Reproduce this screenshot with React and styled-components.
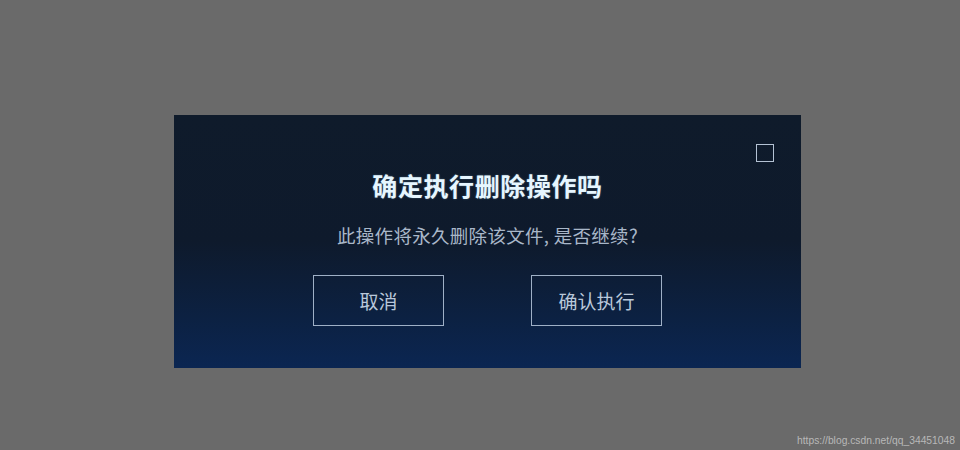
import React from "react";
import styled, { createGlobalStyle } from "styled-components";

const GlobalStyle = createGlobalStyle`
  html, body { margin: 0; padding: 0; }
  body {
    width: 960px;
    height: 450px;
    overflow: hidden;
    background: #6a6a6a;
    font-family: "Noto Sans CJK SC", "Noto Sans", sans-serif;
  }
`;

const Page = styled.div`
  position: relative;
  width: 960px;
  height: 450px;
  box-sizing: border-box;
  padding: 115px 0 0 174px;
`;

const Dialog = styled.div`
  position: relative;
  width: 627px;
  height: 253px;
  box-sizing: border-box;
  padding-top: 56px;
  display: flex;
  flex-direction: column;
  align-items: center;
  background: linear-gradient(180deg, #0f1b2b 0%, #0e1a2c 50%, #0c2142 80%, #0b2652 100%);
`;

const CloseBox = styled.button`
  position: absolute;
  top: 29px;
  right: 27px;
  width: 18px;
  height: 18px;
  box-sizing: border-box;
  padding: 0;
  border: 1.5px solid #b4c2d4;
  background: transparent;
  cursor: pointer;
`;

const Title = styled.h2`
  margin: 0;
  font-size: 25px;
  line-height: 28px;
  font-weight: 700;
  color: #e6f6ff;
  letter-spacing: 0.6px;
  text-shadow: 0 0 2px rgba(160, 220, 255, 0.35);
`;

const Message = styled.p`
  margin: 24px 0 0;
  font-size: 18.5px;
  line-height: 24px;
  color: #a9b7c9;
  letter-spacing: 0.3px;
`;

const Actions = styled.div`
  display: flex;
  gap: 87px;
  margin-top: 28px;
`;

const ActionButton = styled.button`
  width: 131px;
  height: 51px;
  box-sizing: border-box;
  border: 1.5px solid #9fb0c6;
  background: transparent;
  color: #b9c8da;
  font-family: inherit;
  font-size: 19px;
  padding: 0;
  cursor: pointer;
`;

const Watermark = styled.span`
  position: absolute;
  right: 5px;
  bottom: 4px;
  font-family: "Liberation Sans", Arial, sans-serif;
  font-size: 10.3px;
  color: #b8b8b8;
`;

export default function App() {
  return (
    <>
      <GlobalStyle />
      <Page>
        <Dialog>
          <CloseBox aria-label="关闭" />
          <Title>确定执行删除操作吗</Title>
          <Message>此操作将永久删除该文件, 是否继续?</Message>
          <Actions>
            <ActionButton>取消</ActionButton>
            <ActionButton>确认执行</ActionButton>
          </Actions>
        </Dialog>
        <Watermark>https://blog.csdn.net/qq_34451048</Watermark>
      </Page>
    </>
  );
}
